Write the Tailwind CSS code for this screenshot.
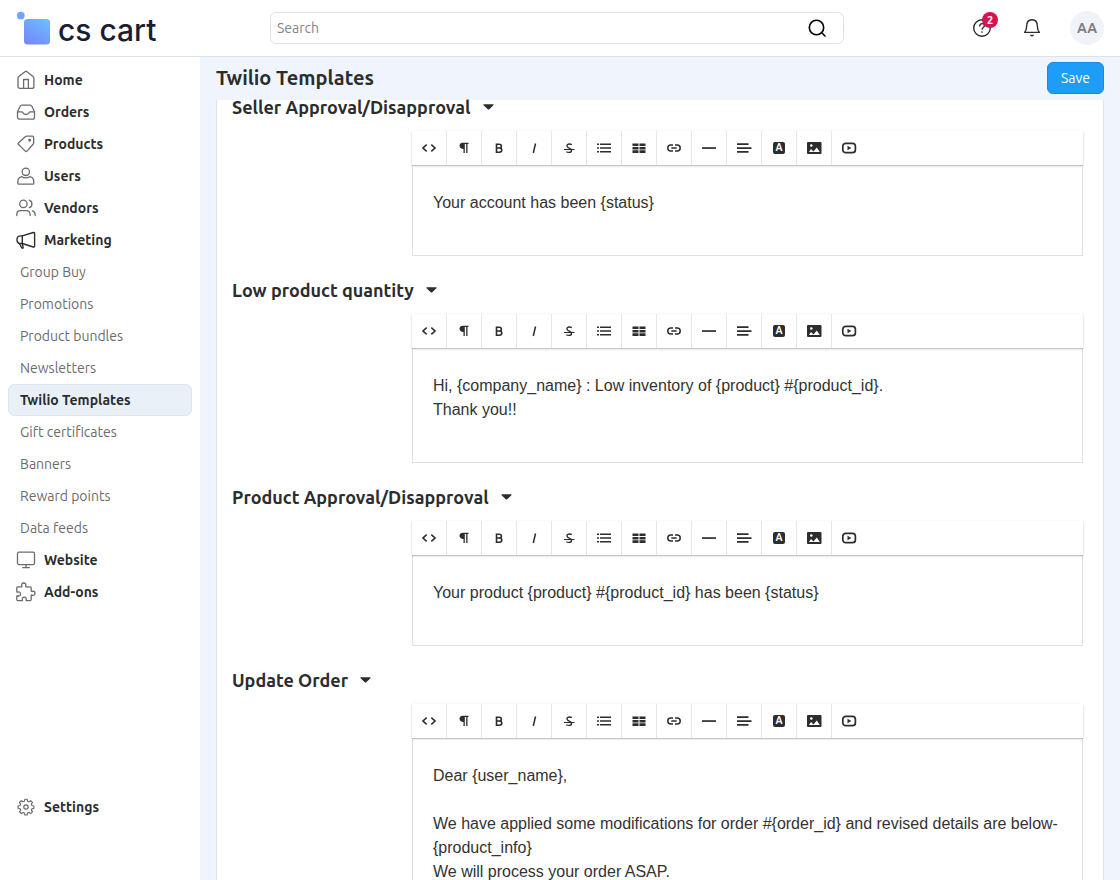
<!DOCTYPE html>
<html lang="en">

<head>
    <meta charset="UTF-8" />
    <meta name="viewport" content="width=device-width, initial-scale=1.0" />
    <title>Twilio Templates - CS-Cart</title>
    <script src="https://cdn.jsdelivr.net/npm/@tailwindcss/browser@4"></script>
</head>

<body class="h-screen flex flex-col overflow-hidden bg-white text-[#2b2d2e] text-sm font-[Ubuntu,'Noto_Sans',sans-serif]">

    <header class="h-[57px] shrink-0 flex items-center border-b border-[#dde1ea] px-4">
        <a href="#" class="w-[254px] shrink-0 flex items-center gap-2" aria-label="cs cart">
            <svg class="w-[34px] h-[34px]" viewBox="0 0 34 34">
                <defs>
                    <linearGradient id="logo-fill" x1="0.2" y1="1" x2="0.8" y2="0">
                        <stop offset="0" stop-color="#7687fc" />
                        <stop offset="1" stop-color="#6bbcfd" />
                    </linearGradient>
                </defs>
                <circle cx="4.8" cy="4.6" r="3.9" fill="#75a5fb" />
                <rect x="8" y="8" width="26" height="25.5" rx="3.5" fill="url(#logo-fill)" />
            </svg>
            <span class="pt-1 text-[30px] leading-8 text-[#1b1d30] font-medium font-[Inter,sans-serif]">cs cart</span>
        </a>

        <form class="flex-1 max-w-[574px] h-8 flex items-center border border-[#dde1ea] rounded-md">
            <input type="search" aria-label="Search" placeholder="Search"
                class="flex-1 min-w-0 px-1.5 text-sm outline-none placeholder:text-[#858585]" />
            <button class="px-4" aria-label="Find">
                <svg class="w-5 h-5 text-black" viewBox="0 0 20 20" fill="none" stroke="currentColor" stroke-width="1.6" stroke-linecap="round">
                    <circle cx="9.5" cy="9.5" r="7.2" />
                    <path d="M14.8 14.8l3.2 3.2" />
                </svg>
            </button>
        </form>

        <div class="ml-auto pl-4 flex items-center gap-7">
            <button class="relative" aria-label="Help">
                <svg class="w-5 h-5" viewBox="0 0 20 20" fill="none" stroke="currentColor" stroke-width="1.4" stroke-linecap="round">
                    <circle cx="10" cy="10" r="8.3" />
                    <path d="M7.7 8c.1-1.6 1-2.4 2.4-2.4 1.3 0 2.3.8 2.3 2.1 0 1.7-2.3 1.8-2.3 3.5" />
                    <path d="M10 14h.01" stroke-width="1.7" />
                </svg>
                <span class="absolute -top-1.5 left-2.5 w-4 h-4 rounded-full bg-[#d6124f] text-white text-[11px] leading-4 font-bold text-center">2</span>
            </button>
            <button class="ml-0.5" aria-label="Notifications">
                <svg class="w-5 h-5" viewBox="0 0 20 20" fill="none" stroke="currentColor" stroke-width="1.4" stroke-linejoin="round" stroke-linecap="round">
                    <path d="M2.6 14.4c1.4-1.7 2-3.4 2-6C4.6 4.100 6.8 1.700 10 1.700s5.400 2.400 5.400 6.700c0 2.600.6 4.300 2 6z" />
                    <path d="M8.800 17.200c.7.700 1.700.700 2.400 0" />
                </svg>
            </button>
            <button class="w-[34px] h-[34px] rounded-full bg-[#f0f3fa] text-[#7d7d7d] text-sm font-bold">AA</button>
        </div>
    </header>

    <div class="flex-1 min-h-0 flex">

        <aside class="w-[200px] shrink-0 flex flex-col pt-[7px] pb-[57px] px-2">
            <nav class="flex flex-col font-bold">
                <a href="#" class="h-8 pl-2 flex items-center gap-2">
                    <svg class="w-5 h-5 text-[#6b6b6b]" viewBox="0 0 20 20" fill="none" stroke="currentColor" stroke-width="1.3" stroke-linejoin="round">
                        <path d="M2 8.200c0-.8.300-1.300.9-1.800l6-4.700c.6-.5 1.500-.5 2.100 0l6 4.700c.6.500.9 1 .9 1.800v8.200c0 1.200-.7 1.900-1.900 1.900H3.900C2.700 18.300 2 17.600 2 16.400z" />
                        <path d="M7.600 18.300V9.500h4.800v8.800" />
                    </svg>
                    Home
                </a>
                <a href="#" class="h-8 pl-2 flex items-center gap-2">
                    <svg class="w-5 h-5 text-[#6b6b6b]" viewBox="0 0 20 20" fill="none" stroke="currentColor" stroke-width="1.3" stroke-linejoin="round">
                        <path d="M1.500 9.800l2.600-5.500c.4-.8.900-1.200 1.800-1.200h8.200c.9 0 1.400.4 1.800 1.200l2.600 5.500v5.400c0 1.200-.7 1.900-1.900 1.900H3.400c-1.200 0-1.900-.7-1.900-1.900z" />
                        <path d="M1.500 9.800h4.200c.8 0 1 .4 1.300 1 .5 1.100 1.300 1.700 3 1.700s2.500-.6 3-1.700c.3-.6.500-1 1.300-1h4.200" />
                    </svg>
                    Orders
                </a>
                <a href="#" class="h-8 pl-2 flex items-center gap-2">
                    <svg class="w-5 h-5 text-[#6b6b6b]" viewBox="0 0 20 20" fill="none" stroke="currentColor" stroke-width="1.3" stroke-linejoin="round">
                        <path d="M2.400 8.900L9.300 2.800c.5-.4.900-.6 1.500-.6h5.700c.8 0 1.200.5 1.200 1.200v5.300c0 .7-.2 1.100-.6 1.600l-6.100 6.800c-.5.600-1.200.600-1.700 0l-7-6.800c-.4-.4-.4-1 .1-1.400z" />
                        <circle cx="13.600" cy="6.200" r=".8" fill="currentColor" />
                    </svg>
                    Products
                </a>
                <a href="#" class="h-8 pl-2 flex items-center gap-2">
                    <svg class="w-5 h-5 text-[#6b6b6b]" viewBox="0 0 20 20" fill="none" stroke="currentColor" stroke-width="1.3" stroke-linejoin="round">
                        <circle cx="9.800" cy="5.800" r="3.700" />
                        <path d="M5.800 10.700c-2.500.6-4 2.600-4 5.300v1.200c0 .7.300 1 1 1h14c.7 0 1-.3 1-1V16c0-2.700-1.500-4.700-4-5.300-1.200.8-2.500 1.200-4 1.200s-2.800-.4-4-1.200z" />
                    </svg>
                    Users
                </a>
                <a href="#" class="h-8 pl-2 flex items-center gap-2">
                    <svg class="w-5 h-5 text-[#6b6b6b]" viewBox="0 0 20 20" fill="none" stroke="currentColor" stroke-width="1.3" stroke-linecap="round">
                        <circle cx="7.400" cy="5.900" r="3.700" />
                        <path d="M.8 17.600v-1.200c0-2.300 1.400-3.700 3.700-3.700h5.900c2.300 0 3.700 1.400 3.700 3.700v1.200" />
                        <path d="M13.300 2.200c1.700.6 2.600 1.900 2.600 3.700s-.9 3.100-2.600 3.700M16.300 12.800c1.900.5 2.900 1.800 2.900 3.800v1" />
                    </svg>
                    Vendors
                </a>
                <a href="#" class="h-8 pl-2 flex items-center gap-2">
                    <svg class="w-5 h-5" viewBox="0 0 20 20" fill="none" stroke="currentColor" stroke-width="1.4" stroke-linejoin="round" stroke-linecap="round">
                        <path d="M6.300 5.900l11-3.400c.8-.2 1.300.1 1.300.9v12.700c0 .8-.5 1.100-1.300.9l-11-3.500" />
                        <path d="M6.300 5.900H4.500C2.400 5.900 1 7.500 1 9.700s1.400 3.800 3.500 3.800h1.800z" />
                        <path d="M3.500 13.500l2 4c.3.600.7.800 1.300.6l.4-.2-.9-4.400" />
                    </svg>
                    Marketing
                </a>
            </nav>

            <nav class="flex flex-col text-[#6c6c6c]">
                <a href="#" class="h-8 px-3 leading-8">Group Buy</a>
                <a href="#" class="h-8 px-3 leading-8">Promotions</a>
                <a href="#" class="h-8 px-3 leading-8">Product bundles</a>
                <a href="#" class="h-8 px-3 leading-8">Newsletters</a>
                <a href="#" class="h-8 px-[11px] leading-[30px] rounded-md border border-[#dfe6f1] bg-[#eaf0f8] text-[#2b2d2e] font-bold">Twilio Templates</a>
                <a href="#" class="h-8 px-3 leading-8">Gift certificates</a>
                <a href="#" class="h-8 px-3 leading-8">Banners</a>
                <a href="#" class="h-8 px-3 leading-8">Reward points</a>
                <a href="#" class="h-8 px-3 leading-8">Data feeds</a>
            </nav>

            <nav class="flex flex-1 flex-col font-bold">
                <a href="#" class="h-8 pl-2 flex items-center gap-2">
                    <svg class="w-5 h-5 text-[#6b6b6b]" viewBox="0 0 20 20" fill="none" stroke="currentColor" stroke-width="1.3" stroke-linecap="round">
                        <rect x="1.500" y="2.200" width="17" height="12.400" rx="1.500" />
                        <path d="M10 14.600v3M6.600 17.600h6.800" />
                    </svg>
                    Website
                </a>
                <a href="#" class="h-8 pl-2 flex items-center gap-2">
                    <svg class="w-5 h-5 text-[#6b6b6b]" viewBox="0 0 20 20" fill="none" stroke="currentColor" stroke-width="1.3" stroke-linejoin="round">
                        <path d="M1.600 4.800h3.800c.5 0 .7-.3.500-.8C5.200 2.300 6.200 1 7.800 1s2.600 1.300 1.900 3c-.2.500 0 .8.500.8h4c.7 0 1 .3 1 1v3c0 .5.300.7.800.500 1.700-.7 3 .3 3 1.900s-1.300 2.600-3 1.900c-.5-.2-.8 0-.8.500v4c0 .7-.3 1-1 1h-3.500c-.5 0-.7-.3-.5-.8.500-1.500-.4-2.600-1.900-2.600s-2.400 1.100-1.900 2.600c.2.500 0 .8-.500.800H1.800c-.7 0-1-.3-1-1v-3.300c0-.5.300-.7.800-.5 1.700.6 2.900-.3 2.900-1.900S3.300 9.500 1.600 10.100c-.5.200-.8 0-.8-.5V5.800c0-.7.2-1 .8-1z" />
                    </svg>
                    Add-ons
                </a>
                <a href="#" class="mt-auto h-8 pl-2 flex items-center gap-2">
                    <svg class="w-5 h-5 text-[#6b6b6b]" viewBox="-1 -0.500 22 22" fill="none" stroke="currentColor" stroke-width="1.3" stroke-linejoin="round">
                        <path d="M8.700 2h2.600l.5 2.200 1.500.6 1.900-1.200 1.900 1.900-1.200 1.900.6 1.400 2.200.6v2.500l-2.200.6-.6 1.400 1.200 1.900-1.900 1.900-1.900-1.200-1.500.6-.5 2.200H8.700l-.5-2.200-1.500-.6-1.900 1.200-1.900-1.900 1.200-1.900-.6-1.400-2.200-.6V9.400l2.200-.6.6-1.400-1.200-1.900 1.900-1.900 1.900 1.200 1.500-.6z" />
                        <circle cx="10" cy="10.500" r="2.400" />
                    </svg>
                    Settings
                </a>
            </nav>
        </aside>

        <main class="flex-1 min-w-0 flex flex-col bg-[#f0f4fc] px-4">
            <div class="h-[43px] shrink-0 flex items-center justify-between pb-0.5">
                <h1 class="text-xl font-bold">Twilio Templates</h1>
                <button class="h-8 px-[13px] rounded-md border border-[#1c87dc] bg-[#1d9df8] text-white text-sm">Save</button>
            </div>

            <div class="flex-1 min-h-0 flex flex-col gap-[27px] bg-white border-x border-[#dde1ea] pl-[15px] pr-5">
                <section>
                    <h2><button class="flex items-center gap-3 text-lg leading-[14px] font-bold">Seller Approval/Disapproval <svg class="w-[11px] h-[6px]" viewBox="0 0 11 6" fill="currentColor"><path d="M1 .3h9c.6 0 .8.500.4.900L6.300 5.200c-.5.500-1.100.500-1.600 0L.6 1.200C.2.800.4.300 1 .3z" /></svg></button></h2>
                    <div class="mt-[17px] ml-[180px]">
                        <div class="editor-toolbar relative h-[34px] flex shadow-[0_1px_3px_rgba(0,0,0,0.12),0_1px_1px_rgba(0,0,0,0.16)]"></div>
                        <textarea rows="1" aria-label="Seller Approval/Disapproval" class="block w-full resize-none overflow-hidden outline-none border border-t-0 border-[#e0e0e0] px-5 pt-[26px] pb-10 text-base text-[#333] font-['Liberation_Sans',sans-serif]">Your account has been {status}</textarea>
                    </div>
                </section>

                <section>
                    <h2><button class="flex items-center gap-3 text-lg leading-[14px] font-bold">Low product quantity <svg class="w-[11px] h-[6px]" viewBox="0 0 11 6" fill="currentColor"><path d="M1 .3h9c.6 0 .8.500.4.900L6.300 5.200c-.5.500-1.100.500-1.600 0L.6 1.200C.2.800.4.300 1 .3z" /></svg></button></h2>
                    <div class="mt-[17px] ml-[180px]">
                        <div class="editor-toolbar relative h-[34px] flex shadow-[0_1px_3px_rgba(0,0,0,0.12),0_1px_1px_rgba(0,0,0,0.16)]"></div>
                        <textarea rows="2" aria-label="Low product quantity" class="block w-full resize-none overflow-hidden outline-none border border-t-0 border-[#e0e0e0] px-5 pt-[26px] pb-10 text-base text-[#333] font-['Liberation_Sans',sans-serif]">Hi, {company_name} : Low inventory of {product} #{product_id}.
Thank you!!</textarea>
                    </div>
                </section>

                <section>
                    <h2><button class="flex items-center gap-3 text-lg leading-[14px] font-bold">Product Approval/Disapproval <svg class="w-[11px] h-[6px]" viewBox="0 0 11 6" fill="currentColor"><path d="M1 .3h9c.6 0 .8.500.4.900L6.300 5.200c-.5.500-1.100.500-1.600 0L.6 1.200C.2.800.4.300 1 .3z" /></svg></button></h2>
                    <div class="mt-[17px] ml-[180px]">
                        <div class="editor-toolbar relative h-[34px] flex shadow-[0_1px_3px_rgba(0,0,0,0.12),0_1px_1px_rgba(0,0,0,0.16)]"></div>
                        <textarea rows="1" aria-label="Product Approval/Disapproval" class="block w-full resize-none overflow-hidden outline-none border border-t-0 border-[#e0e0e0] px-5 pt-[26px] pb-10 text-base text-[#333] font-['Liberation_Sans',sans-serif]">Your product {product} #{product_id} has been {status}</textarea>
                    </div>
                </section>

                <section>
                    <h2><button class="flex items-center gap-3 text-lg leading-[14px] font-bold">Update Order <svg class="w-[11px] h-[6px]" viewBox="0 0 11 6" fill="currentColor"><path d="M1 .3h9c.6 0 .8.500.4.900L6.300 5.200c-.5.500-1.100.500-1.600 0L.6 1.200C.2.800.4.300 1 .3z" /></svg></button></h2>
                    <div class="mt-[17px] ml-[180px]">
                        <div class="editor-toolbar relative h-[34px] flex shadow-[0_1px_3px_rgba(0,0,0,0.12),0_1px_1px_rgba(0,0,0,0.16)]"></div>
                        <textarea rows="5" aria-label="Update Order" class="block w-full resize-none overflow-hidden outline-none border border-t-0 border-[#e0e0e0] px-5 pt-[26px] pb-10 text-base text-[#333] font-['Liberation_Sans',sans-serif]">Dear {user_name},

We have applied some modifications for order #{order_id} and revised details are below-
{product_info}
We will process your order ASAP.</textarea>
                    </div>
                </section>
            </div>
        </main>
    </div>

    <!-- Toolbar shared by every editor -->
    <template id="toolbar">
        <button class="w-[35px] border-r border-[#e6e6e6] flex items-center justify-center" aria-label="HTML">
            <svg class="w-4 h-4" viewBox="0 0 16 16" fill="none" stroke="currentColor" stroke-width="1.600"><path d="M5.700 4.700L2 8l3.700 3.300M10.300 4.700L14 8l-3.700 3.300" /></svg>
        </button>
        <button class="w-[35px] border-r border-[#e6e6e6] flex items-center justify-center" aria-label="Format">
            <svg class="w-4 h-4" viewBox="0 0 16 16" fill="currentColor"><path d="M6.800 2.700h5.700v1.400h-1v9h-1.300v-9H8.800v9H7.500V9C5 9 3.500 7.800 3.500 5.800s1.300-3.100 3.300-3.100z" /></svg>
        </button>
        <button class="w-[35px] border-r border-[#e6e6e6] flex items-center justify-center" aria-label="Bold">
            <svg class="w-4 h-4" viewBox="0 0 16 16" fill="none" stroke="currentColor" stroke-width="1.600"><path d="M5.500 4.300h2.600c1.500 0 2.300.6 2.300 1.900S9.600 8 8.100 8H5.500h2.800c1.700 0 2.500.7 2.500 2.100s-.8 2.200-2.500 2.200H5.500z" /></svg>
        </button>
        <button class="w-[35px] border-r border-[#e6e6e6] flex items-center justify-center" aria-label="Italic">
            <svg class="w-4 h-4" viewBox="0 0 16 16" fill="none" stroke="currentColor" stroke-width="1.500"><path d="M9.500 3.500l-2.200 9.500" /></svg>
        </button>
        <button class="w-[35px] border-r border-[#e6e6e6] flex items-center justify-center" aria-label="Deleted">
            <svg class="w-4 h-4" viewBox="0 0 16 16" fill="none" stroke="currentColor" stroke-width="1.400"><path d="M10.800 4.700C10 4.200 9.200 4 8.300 4 6.900 4 6 4.700 6 5.900c0 2.700 4.500 1.700 4.500 4.500 0 1.300-1 2-2.500 2-1.100 0-2-.2-2.700-.7" /><path d="M3 9.500h10.500" stroke-width="1.100" /></svg>
        </button>
        <button class="w-[35px] border-r border-[#e6e6e6] flex items-center justify-center" aria-label="Lists">
            <svg class="w-4 h-4" viewBox="0 0 16 16" fill="currentColor"><path d="M1 3.400h2V5H1zM4 3.400h11V5H4zM1 7.200h2v1.600H1zM4 7.200h11v1.600H4zM1 11h2v1.600H1zM4 11h11v1.600H4z" /></svg>
        </button>
        <button class="w-[35px] border-r border-[#e6e6e6] flex items-center justify-center" aria-label="Table">
            <svg class="w-4 h-4" viewBox="0 0 16 16" fill="currentColor"><path d="M1.500 3.500h6v2.600h-6zM8.500 3.500h6v2.600h-6zM1.500 7h6v2.400h-6zM8.500 7h6v2.400h-6zM1.500 10.300h6v2.600h-6zM8.500 10.300h6v2.600h-6z" /></svg>
        </button>
        <button class="w-[35px] border-r border-[#e6e6e6] flex items-center justify-center" aria-label="Link">
            <svg class="w-4 h-4" viewBox="0 0 16 16" fill="none" stroke="currentColor" stroke-width="1.500"><path d="M7 11H4.800a3 3 0 010-6H7M9 5h2.200a3 3 0 010 6H9M5.300 8h5.400" /></svg>
        </button>
        <button class="w-[35px] border-r border-[#e6e6e6] flex items-center justify-center" aria-label="Line">
            <svg class="w-4 h-4" viewBox="0 0 16 16" fill="currentColor"><path d="M1 7.200h14v1.700H1z" /></svg>
        </button>
        <button class="w-[35px] border-r border-[#e6e6e6] flex items-center justify-center" aria-label="Align">
            <svg class="w-4 h-4" viewBox="0 0 16 16" fill="currentColor"><path d="M1 3.300h11.500v1.700H1zM1 7.200h14.500v1.700H1zM1 11h11.500v1.700H1z" /></svg>
        </button>
        <button class="w-[35px] border-r border-[#e6e6e6] flex items-center justify-center" aria-label="Text color">
            <span class="w-3 h-3 rounded-xs bg-[#2b2d2e] text-white text-[10px] leading-3 font-bold">A</span>
        </button>
        <button class="w-[35px] border-r border-[#e6e6e6] flex items-center justify-center" aria-label="Image">
            <svg class="w-4 h-4" viewBox="0 0 16 16"><rect x="1" y="2" width="14.500" height="12" rx="1" fill="currentColor" /><path d="M3 12l2-3 2 2 .5.500L10.800 7.500 13.800 12z" fill="#fff" /><circle cx="5.300" cy="5.500" r="1.300" fill="#fff" /></svg>
        </button>
        <button class="w-[35px] border-r border-transparent flex items-center justify-center" aria-label="Video">
            <svg class="w-4 h-4" viewBox="0 0 16 16" fill="none" stroke="currentColor" stroke-width="1.700"><rect x="1.800" y="3.300" width="12.600" height="9.400" rx="3" /><path d="M6.500 5.800L10.300 8l-3.800 2.200z" fill="currentColor" stroke="none" /></svg>
        </button>
    </template>

    <script>
        const toolbar = document.getElementById('toolbar')
        document.querySelectorAll('.editor-toolbar').forEach((el) => {
            el.append(toolbar.content.cloneNode(true))
        })
    </script>

</body>

</html>
